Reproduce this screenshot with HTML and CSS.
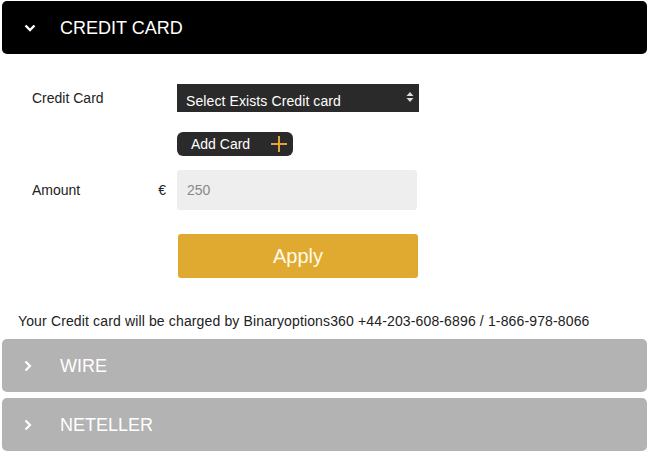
FILE: index.html
```html
<!DOCTYPE html>
<html lang="en">
<head>
<meta charset="utf-8">
<title>Deposit</title>
<link rel="stylesheet" href="styles.css">
</head>
<body>
<div class="panel panel-open">
  <svg class="chev" width="12" height="12" viewBox="0 0 12 12"><path d="M1.5 3.5 L6 8 L10.5 3.5" fill="none" stroke="#fff" stroke-width="2.4"/></svg>
  <span class="panel-title">CREDIT CARD</span>
</div>
<div class="content">
  <div class="form">
    <div class="label">Credit Card</div>
    <div class="select">
      <span>Select Exists Credit card</span>
      <svg width="8" height="12" viewBox="0 0 8 12"><path d="M4 1 L7.5 5 H0.5 Z M4 11 L7.5 7 H0.5 Z" fill="#ddd"/></svg>
    </div>
    <div class="label"></div>
    <div class="add-row">
      <div class="add-btn">
        <span>Add Card</span>
        <svg width="16" height="16" viewBox="0 0 16 16"><path d="M8 0 V16 M0 8 H16" stroke="#e3a235" stroke-width="2"/></svg>
      </div>
    </div>
    <div class="label label-amount"><span>Amount</span><span class="cur">€</span></div>
    <input class="amount" type="text" value="250">
    <div class="label"></div>
    <button class="apply">Apply</button>
  </div>
  <p class="note">Your Credit card will be charged by Binaryoptions360 +44-203-608-6896 / 1-866-978-8066</p>
</div>
<div class="panel panel-closed">
  <svg class="chev" width="12" height="12" viewBox="0 0 12 12"><path d="M1.5 1.5 L6 6 L1.5 10.5" fill="none" stroke="#fff" stroke-width="2.2"/></svg>
  <span class="panel-title">WIRE</span>
</div>
<div class="panel panel-closed panel-last">
  <svg class="chev" width="12" height="12" viewBox="0 0 12 12"><path d="M1.5 1.5 L6 6 L1.5 10.5" fill="none" stroke="#fff" stroke-width="2.2"/></svg>
  <span class="panel-title">NETELLER</span>
</div>
</body>
</html>
```
FILE: styles.css
```css
html, body {
  margin: 0;
  background: #fff;
}
body {
  padding: 1px 1px 0 2px;
  font-family: "Liberation Sans", Arial, sans-serif;
  font-size: 14px;
  color: #222;
}
.panel {
  height: 53px;
  border-radius: 5px;
  display: flex;
  align-items: center;
  padding-left: 22px;
  box-sizing: border-box;
}
.panel-open {
  background: #000;
}
.panel-closed {
  background: #b3b3b3;
}
.panel-last {
  margin-top: 6px;
}
.chev {
  flex: none;
  margin-right: 24px;
}
.panel-closed .chev {
  margin-top: 1px;
}
.panel-title {
  color: #fff;
  font-size: 18px;
  line-height: 20px;
  padding-top: 1px;
}
.content {
  padding-top: 30px;
  padding-bottom: 10px;
}
.form {
  display: grid;
  grid-template-columns: 145px 242px;
  row-gap: 20px;
  padding-left: 30px;
  align-items: center;
}
.label {
  font-size: 14px;
  color: #222;
}
.label-amount {
  display: flex;
  justify-content: space-between;
  padding-right: 11px;
}
.select {
  height: 28px;
  background: #2a2a2a;
  color: #fff;
  display: flex;
  align-items: center;
  justify-content: space-between;
  padding: 5px 5px 0 9px;
  box-sizing: border-box;
  letter-spacing: 0.1px;
}
.select svg {
  margin-top: -8px;
}
.add-row {
  display: flex;
}
.add-btn {
  height: 24px;
  width: 116px;
  background: #2a2a2a;
  border-radius: 6px;
  color: #fff;
  display: flex;
  align-items: center;
  justify-content: space-between;
  padding: 0 6px 0 14px;
  box-sizing: border-box;
}
.form > :nth-child(5),
.form > :nth-child(6) {
  margin-top: -6px;
}
.amount {
  width: 240px;
  height: 40px;
  box-sizing: border-box;
  border: none;
  border-radius: 3px;
  background: #eee;
  padding: 0 10px;
  font-family: inherit;
  font-size: 14px;
  color: #888;
  outline: none;
}
.form > :nth-child(7),
.form > :nth-child(8) {
  margin-top: 4px;
}
.apply {
  width: 240px;
  height: 44px;
  margin-left: 1px;
  border: none;
  border-radius: 3px;
  background: #e0aa30;
  color: #fffbea;
  font-family: inherit;
  font-size: 20px;
  padding: 0;
}
.note {
  margin: 35px 0 0 16px;
  line-height: 16px;
  font-size: 14px;
  letter-spacing: 0.14px;
  color: #222;
}
```
